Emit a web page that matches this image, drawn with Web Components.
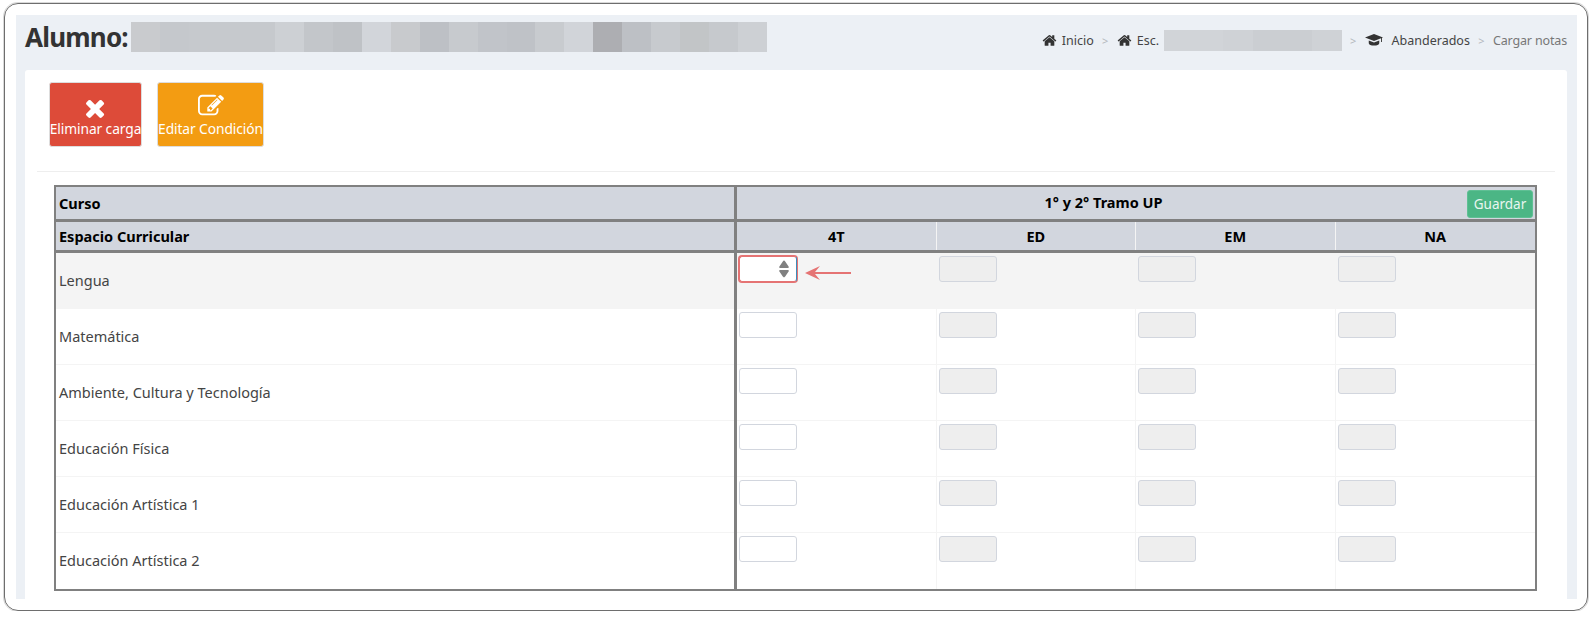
<!DOCTYPE html>
<html>
<head>
<meta charset="utf-8">
<title>Cargar notas</title>
<style>
  html, body { margin: 0; background: #fff; }
  body { font-family: "Noto Sans", Lato, sans-serif; color: #333; }
</style>
</head>
<body>
<page-frame>
  <page-header>
    <span slot="title" style="width:106px;letter-spacing:-.8px">Alumno:</span>
    <pixel-blur slot="title" cells="#c9cbce,#c5c8cc,#c6c9cd,#c6c9cd,#c6c9cd,#cdd0d4,#c3c6ca,#bfc2c6,#d2d5da,#c8cacd,#bdc0c5,#c7cace,#c1c4c9,#bfc2c7,#c8cbcf,#d1d4d9,#adaeb2,#bdc0c5,#c7cace,#c2c5c7,#c6c9cd,#cdd0d4" cell="28.9" h="30"></pixel-blur>
    <bread-crumb slot="crumbs"></bread-crumb>
  </page-header>
  <content-card>
    <div slot="tools" style="display:flex;gap:15px">
      <tool-button color="#dd4b39" icon="times" label="Eliminar carga" w="93"></tool-button>
      <tool-button color="#f39c12" icon="edit" label="Editar Condición" w="107"></tool-button>
    </div>
    <grade-table>
      <grade-row kind="curso" label="Curso"></grade-row>
      <grade-row kind="head" label="Espacio Curricular"></grade-row>
      <grade-row label="Lengua" striped marked></grade-row>
      <grade-row label="Matemática"></grade-row>
      <grade-row label="Ambiente, Cultura y Tecnología"></grade-row>
      <grade-row label="Educación Física"></grade-row>
      <grade-row label="Educación Artística 1"></grade-row>
      <grade-row label="Educación Artística 2" last></grade-row>
    </grade-table>
  </content-card>
</page-frame>

<script>
const HOME_PATH = 'M1472 992v480q0 26-19 45t-45 19h-384v-384h-256v384h-384q-26 0-45-19t-19-45v-480q0-1 .5-3t.5-3l575-474 575 474q1 2 1 6zm223-69l-62 74q-8 9-21 11h-3q-13 0-21-7l-692-577-692 577q-12 8-24 7-13-2-21-11l-62-74q-8-10-7-23.5t11-21.5l719-599q32-26 76-26t76 26l244 204v-195q0-14 9-23t23-9h192q14 0 23 9t9 23v408l219 182q10 8 11 21.5t-7 23.5z';
const ICONS = {
  times: 'M1298 1322q0 40-28 68l-136 136q-28 28-68 28t-68-28l-294-294-294 294q-28 28-68 28t-68-28l-136-136q-28-28-28-68t28-68l294-294-294-294q-28-28-28-68t28-68l136-136q28-28 68-28t68 28l294 294 294-294q28-28 68-28t68 28l136 136q28 28 28 68t-28 68l-294 294 294 294q28 28 28 68z',
  edit: 'M888 1184l116-116-152-152-116 116v56h96v96h56zm440-720q-16-16-33 1l-350 350q-17 17-1 33t33-1l350-350q17-17 1-33zm80 594v190q0 119-84.5 203.5t-203.5 84.5h-832q-119 0-203.5-84.5t-84.5-203.5v-832q0-119 84.5-203.5t203.5-84.5h832q63 0 117 25 15 7 18 23 3 17-9 29l-49 49q-14 14-32 8-23-6-45-6h-832q-66 0-113 47t-47 113v832q0 66 47 113t113 47h832q66 0 113-47t47-113v-126q0-13 9-22l64-64q15-15 35-7t20 29zm-96-738l288 288-672 672h-288v-288zm444 132l-92 92-288-288 92-92q28-28 68-28t68 28l152 152q28 28 28 68t-28 68z',
};

class PageFrame extends HTMLElement {
  constructor() {
    super();
    this.attachShadow({ mode: 'open' }).innerHTML = `
      <style>
        :host { display: block; box-sizing: border-box; width: 1584px; height: 608px; margin: 3px 0 0 4px;
          border: 1px solid #6e6e6e; border-radius: 14px; box-shadow: 0 0 0 1px rgba(128,128,128,.3);
          padding: 11px 10px 11px 11px; }
        .bg { background: #ecf0f5; height: 584px; padding: 0 10px 0 9px; box-sizing: border-box; }
      </style>
      <div class="bg"><slot></slot></div>`;
  }
}

class PageHeader extends HTMLElement {
  constructor() {
    super();
    this.attachShadow({ mode: 'open' }).innerHTML = `
      <style>
        :host { display: flex; justify-content: space-between; height: 55px; }
        .title { display: flex; align-items: flex-start; padding-top: 7px;
          font-size: 26px; font-weight: 700; line-height: 30px; color: #333; }
        .crumbs { padding-top: 15px; }
      </style>
      <div class="title"><slot name="title"></slot></div>
      <div class="crumbs"><slot name="crumbs"></slot></div>`;
  }
}

class PixelBlur extends HTMLElement {
  connectedCallback() {
    const cells = this.getAttribute('cells').split(',');
    const w = this.getAttribute('cell');
    const h = this.getAttribute('h');
    this.attachShadow({ mode: 'open' }).innerHTML = `
      <style>
        :host { display: inline-flex; height: ${h}px; }
        i { display: block; width: ${w}px; height: 100%; }
      </style>
      ${cells.map(c => `<i style="background:${c}"></i>`).join('')}`;
  }
}

class BreadCrumb extends HTMLElement {
  constructor() {
    super();
    const home = `<svg class="ic" viewBox="0 0 1792 1792"><path d="${HOME_PATH}"/></svg>`;
    this.attachShadow({ mode: 'open' }).innerHTML = `
      <style>
        :host { display: flex; align-items: center; height: 20px; font-size: 12.5px; color: #444; }
        .ic { width: 15px; height: 15px; fill: #333; margin-right: 5px; }
        .cap { width: 18px; height: 18px; fill: #333; margin-right: 9px; }
        .sep { color: #b4b8bd; font-size: 11px; width: 23px; text-align: center; }
        .on { color: #777; letter-spacing: -.15px; }
        .blur { margin-left: 5px; }
      </style>
      ${home}<span>Inicio</span><span class="sep">&gt;</span>
      ${home}<span>Esc.</span>
      <pixel-blur class="blur" cells="#d1d4d8,#d1d4d8,#cfd2d6,#cbced2,#cbced2,#cfd2d6" cell="29.6" h="21"></pixel-blur>
      <span class="sep">&gt;</span>
      <svg class="cap" viewBox="0 0 24 18"><path d="M12 1 0 5.6l12 4.8 9.4-3.8v5.2h1.2V6.2L24 5.6z"/><path d="M5 9.6v3.6c0 1.8 3.2 3.2 7 3.2s7-1.4 7-3.2V9.6l-7 2.8z"/></svg>
      <span>Abanderados</span><span class="sep">&gt;</span><span class="on">Cargar notas</span>`;
  }
}

class ContentCard extends HTMLElement {
  constructor() {
    super();
    this.attachShadow({ mode: 'open' }).innerHTML = `
      <style>
        :host { display: block; background: #fff; border-radius: 3px 3px 0 0; height: 529px; box-sizing: border-box;
          padding: 12px 12px 0 12px; }
        .tools { padding: 0 12px; height: 89px; box-sizing: border-box; }
        hr { border: 0; border-top: 1px solid #eee; margin: 0 0 13px; }
        .body { padding: 0 17px; }
      </style>
      <div class="tools"><slot name="tools"></slot></div>
      <hr>
      <div class="body"><slot></slot></div>`;
  }
}

class ToolButton extends HTMLElement {
  connectedCallback() {
    const name = this.getAttribute('icon');
    this.attachShadow({ mode: 'open' }).innerHTML = `
      <style>
        :host { display: flex; flex-direction: column; align-items: center; box-sizing: border-box;
          width: ${this.getAttribute('w')}px; height: 65px; padding-top: 10px;
          background: ${this.getAttribute('color')}; color: #fff; border: 1px solid #ddd; border-radius: 3px;
          font-size: 13.8px; letter-spacing: -.1px; white-space: nowrap; }
        svg { width: 26px; height: 26px; fill: #fff; flex: none; }
        .times { transform: translate(2px, 2px) scale(1.05); }
        span { line-height: 20px; }
      </style>
      <svg class="${name}" viewBox="0 0 1792 1792"><path d="${ICONS[name]}"/></svg>
      <span>${this.getAttribute('label')}</span>`;
  }
}

class GradeTable extends HTMLElement {
  constructor() {
    super();
    this.attachShadow({ mode: 'open' }).innerHTML = `
      <style>
        :host { display: block; box-sizing: border-box; width: 1483px; border: 2px solid #808080; }
      </style>
      <slot></slot>`;
  }
}

class GradeInput extends HTMLElement {
  connectedCallback() {
    const disabled = this.hasAttribute('disabled');
    const marked = this.hasAttribute('marked');
    const spinner = marked ? `<svg viewBox="0 0 10 18"><path d="M3.800 1.400Q5-.2 6.200 1.400L9.600 6.400Q10.400 8 8.800 8H1.200Q-.4 8 .4 6.400zM3.800 16.600Q5 18.200 6.200 16.600L9.600 11.600Q10.400 10 8.800 10H1.200Q-.4 10 .4 11.600z" fill="#808080"/></svg>` : '';
    this.attachShadow({ mode: 'open' }).innerHTML = `
      <style>
        :host { display: flex; justify-content: flex-end; align-items: center; box-sizing: border-box; width: 58px; height: 26px;
          border-radius: 3px; background: ${disabled ? '#eee' : '#fff'};
          border: 1px solid ${marked ? '#e57373' : '#d2d6de'}; padding-right: 7px;
          ${marked ? 'border-right-color: #3c8dbc; box-shadow: 0 0 0 1px #e57373;' : ''} }
        svg { width: 10px; height: 18px; }
      </style>${spinner}`;
  }
}

class GradeRow extends HTMLElement {
  connectedCallback() {
    const kind = this.getAttribute('kind');
    const label = this.getAttribute('label');
    let cells;
    if (kind == 'curso') {
      cells = `<div class="cell span"><b>1° y 2° Tramo UP</b><span class="save">Guardar</span></div>`;
    } else if (kind == 'head') {
      cells = ['4T', 'ED', 'EM', 'NA'].map(t => `<div class="cell ctr"><b>${t}</b></div>`).join('');
    } else {
      const marked = this.hasAttribute('marked');
      cells = [0, 1, 2, 3].map(i => `<div class="cell inp">
        <grade-input ${i > 0 ? 'disabled' : ''} ${i == 0 && marked ? 'marked' : ''}></grade-input>
      </div>`).join('');
      if (marked) {
        cells += `<svg class="arrow" viewBox="0 0 46 16"><path d="M0 8 15 1 10 7H46V9H10L15 15z" fill="#e57373"/></svg>`;
      }
    }
    const rowH = { curso: 35, head: 31 }[kind] || 56;
    const isHead = !!kind;
    const bg = isHead ? '#d2d6de' : (this.hasAttribute('striped') ? '#f4f4f4' : '#fff');
    const line = kind || this.hasAttribute('last') ? '' : 'linear-gradient(#f4f4f4, #f4f4f4) bottom / 100% 1px no-repeat,';
    this.attachShadow({ mode: 'open' }).innerHTML = `
      <style>
        :host { display: block; position: relative; box-sizing: border-box; height: ${rowH}px; background: ${line} ${bg};
          font-size: 14.5px; color: ${isHead ? '#000' : '#444'}; }
        .grid { display: grid; height: 100%; grid-template-columns: 681px repeat(4, 1fr); box-sizing: border-box;
          ${isHead ? 'border-bottom: 3px solid #808080;' : ''} }
        .label { border-right: 3px solid #808080; padding: 0 3px ${kind == 'head' ? 0 : 2}px; display: flex; align-items: center;
          ${isHead ? 'font-weight: 700;' : ''} }
        .cell { box-sizing: border-box; border-right: 1px solid #f4f4f4; }
        .cell:last-child { border-right: 0; }
        .span { grid-column: 2 / 6; display: flex; align-items: flex-start; padding: 3px 2px 3px 3px; border-right: 0; }
        .span b { flex: 1; text-align: center; line-height: 24px; }
        .ctr { display: flex; align-items: center; justify-content: center; }
        .inp { padding: 3px 2px; }
        .save { width: 66px; height: 28px; box-sizing: border-box; border-radius: 3px; text-align: center;
          background: #4bb685; color: #e8f5ef; font-size: 13.5px; line-height: 26px; border: 1px solid #5fc094; }
        .arrow { position: absolute; left: 749px; top: 12px; width: 46px; height: 16px; }
      </style>
      <div class="grid"><div class="label">${label}</div>${cells}</div>`;
  }
}

customElements.define('page-frame', PageFrame);
customElements.define('page-header', PageHeader);
customElements.define('pixel-blur', PixelBlur);
customElements.define('bread-crumb', BreadCrumb);
customElements.define('content-card', ContentCard);
customElements.define('tool-button', ToolButton);
customElements.define('grade-table', GradeTable);
customElements.define('grade-input', GradeInput);
customElements.define('grade-row', GradeRow);
</script>
</body>
</html>
